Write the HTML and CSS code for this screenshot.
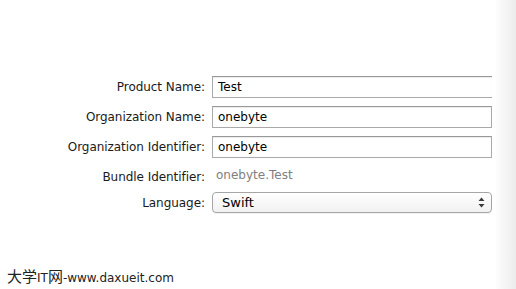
FILE: index.html
```html
<!DOCTYPE html>
<html lang="en">
<head>
    <meta charset="UTF-8">
    <title>New Project Options</title>
    <link rel="stylesheet" href="styles.css">
</head>
<body>
    <div class="window">
        <div class="main">
            <div class="options">
                <label class="label">Product Name:</label>
                <div class="field field-open">Test</div>

                <label class="label">Organization Name:</label>
                <div class="field">onebyte</div>

                <label class="label">Organization Identifier:</label>
                <div class="field">onebyte</div>

                <label class="label">Bundle Identifier:</label>
                <div class="value">onebyte.Test</div>

                <label class="label">Language:</label>
                <div class="popup">
                    <span>Swift</span>
                    <svg class="arrows" width="7" height="11" viewBox="0 0 7 11">
                        <path d="M3.5 0.5 L6.5 4 L0.5 4 Z" fill="#3a3a3a"/>
                        <path d="M3.5 10.5 L6.5 7 L0.5 7 Z" fill="#3a3a3a"/>
                    </svg>
                </div>
            </div>
            <div class="watermark"><span class="cjk">大学</span>IT<span class="cjk">网</span>-www.daxueit.com</div>
        </div>
        <div class="side"></div>
    </div>
</body>
</html>
```

FILE: styles.css
```css
body, html {
    margin: 0;
    padding: 0;
    background-color: #ffffff;
    font-family: "DejaVu Sans", sans-serif;
}

.window {
    display: flex;
    width: 516px;
    height: 289px;
    overflow: hidden;
}

.main {
    flex: 1;
    display: flex;
    flex-direction: column;
}

.side {
    flex: 0 0 20px;
    background: linear-gradient(to right, #fdfdfd, #ececec);
}

.options {
    display: grid;
    grid-template-columns: 200px 280px;
    grid-template-rows: 22px 22px 22px 18px 22px;
    column-gap: 7px;
    row-gap: 8px;
    margin-top: 76px;
    margin-left: 5px;
    font-size: 12px;
}

.label {
    text-align: right;
    color: #1a1a1a;
    line-height: 22px;
    letter-spacing: -0.05px;
}

.field {
    box-sizing: border-box;
    height: 22px;
    border: 1px solid #a9a9a9;
    border-top-color: #989898;
    box-shadow: inset 0 1px 1px rgba(0, 0, 0, 0.08);
    padding-left: 5px;
    line-height: 20px;
    color: #000;
}

.field-open {
    border-right: none;
}

.value {
    line-height: 18px;
    padding-left: 4px;
    color: #808080;
}

.popup {
    box-sizing: border-box;
    height: 21px;
    display: flex;
    align-items: center;
    justify-content: space-between;
    padding: 0 6px 0 9px;
    border: 1px solid #a6a6a6;
    border-radius: 4px;
    background: linear-gradient(#ffffff, #f1f1f1);
    box-shadow: 0 1px 0 rgba(0, 0, 0, 0.05);
    color: #000;
    font-size: 13px;
}

.watermark {
    margin-top: auto;
    margin-bottom: 3px;
    padding-left: 7px;
    font-family: "DejaVu Sans", sans-serif;
    font-size: 12px;
    color: #222;
}

.cjk {
    font-family: "Noto Sans CJK SC", sans-serif;
    font-size: 15px;
}
```
